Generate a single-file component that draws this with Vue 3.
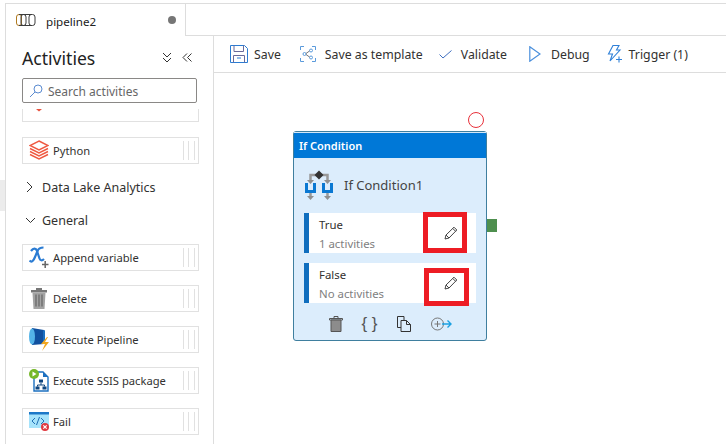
<script setup>
const items = [
  { name: 'Append variable', icon: 'append' },
  { name: 'Delete', icon: 'delete' },
  { name: 'Execute Pipeline', icon: 'pipeline' },
  { name: 'Execute SSIS package', icon: 'ssis' },
  { name: 'Fail', icon: 'fail' },
]

const branches = [
  { name: 'True', detail: '1 activities' },
  { name: 'False', detail: 'No activities' },
]
</script>

<template>
  <div class="page">
    <div class="side-strip"><div class="strip-mark"></div></div>
    <div class="work">
      <div class="tabs">
        <div class="tab">
          <svg class="tab-icon" width="20" height="12" viewBox="0 0 20 12" fill="none" stroke="#3c3c3c" stroke-width="1">
            <rect x="0.5" y="0.5" width="5" height="11" rx="2.5" stroke="#b07a20" />
            <rect x="5" y="0.5" width="5" height="11" rx="2.500" />
            <rect x="13" y="0.5" width="6" height="11" rx="2.500" />
            <path d="M3 .5h13M3 11.500h13" />
          </svg>
          <span class="tab-name">pipeline2</span>
          <span class="dot"></span>
        </div>
        <div class="tab-rest"></div>
      </div>
      <div class="main">
        <aside class="panel">
          <div class="panel-head">
            <h1>Activities</h1>
            <svg width="10" height="11" viewBox="0 0 10 11" fill="none" stroke="#333" class="collapse">
              <path d="M1 1l4 4 4-4M1 6l4 4 4-4" />
            </svg>
            <svg width="10" height="11" viewBox="0 0 10 11" fill="none" stroke="#333" class="collapse2">
              <path d="M5 1.500l-4 4 4 4M9.500 1.500l-4 4 4 4" />
            </svg>
          </div>
          <div class="search">
            <svg width="14" height="14" viewBox="0 0 14 14" fill="none" stroke="#5b8bd0">
              <circle cx="9" cy="5" r="4" />
              <path d="M6 8l-5 5" />
            </svg>
            <span>Search activities</span>
          </div>
          <div class="clip">
            <svg width="8" height="3" viewBox="0 0 8 3"><path d="M1 0h6L4 2.500z" fill="#e8533f" /></svg>
          </div>
          <div class="item first">
            <svg class="item-icon" width="20" height="21" viewBox="0 0 20 21" fill="none" stroke="#ef5a43" stroke-width="1.400">
              <path d="M10 1l9 4.500-9 4.500-9-4.500zM1 8.500l9 4.500 9-4.500M1 11.500l9 4.500 9-4.500M1 14.500l9 4.500 9-4.500" />
            </svg>
            <span>Python</span>
            <i class="grip"></i>
          </div>
          <div class="category closed">
            <svg width="8" height="12" viewBox="0 0 8 12" fill="none" stroke="#333"><path d="M1 1l5 5-5 5" /></svg>
            <span>Data Lake Analytics</span>
          </div>
          <div class="category open">
            <svg width="11" height="7" viewBox="0 0 11 7" fill="none" stroke="#333"><path d="M1 1l4.500 4.500L10 1" /></svg>
            <span>General</span>
          </div>
          <div v-for="item in items" :key="item.name" class="item">
            <svg v-if="item.icon === 'append'" class="item-icon" width="20" height="23" viewBox="0 0 20 23">
              <path d="M0.500 14.500c2 2.500 4 0.500 5.500-3.500l2.500-6c1-2.500 3-3.500 6-3.500" fill="none" stroke="#2b7cd3" stroke-width="2.200" />
              <path d="M2 5c2.500-3.500 5-3 6 0l2.500 7.500c.7 2 2.500 2.500 4.500 .5" fill="none" stroke="#2b7cd3" stroke-width="2.200" />
              <path d="M13 18.500h6.500M16.200 15v7" stroke="#666" stroke-width="1.500" />
            </svg>
            <svg v-else-if="item.icon === 'delete'" class="item-icon" width="20" height="22" viewBox="0 0 20 22">
              <path d="M7 0h6v2H7zM2 2h16v2.500H2z" fill="#777" />
              <path d="M3.500 4.500h13L15.500 21h-11z" fill="#a3a3a3" />
              <path d="M7 6.500v12M10 6.500v12M13 6.500v12" stroke="#666" stroke-width="1.200" />
            </svg>
            <svg v-else-if="item.icon === 'pipeline'" class="item-icon" width="20" height="23" viewBox="0 0 20 23">
              <path d="M3 0l12 2v14L3 17z" fill="#10509f" />
              <ellipse cx="3" cy="8.500" rx="3" ry="8" fill="#54b4e8" />
              <rect x="14" y="2" width="2" height="14" rx="1" fill="#1a6fc0" />
              <path d="M18 9l-6 7h4l-3 7 7-9h-4l3-5z" fill="#f2a71f" />
            </svg>
            <svg v-else-if="item.icon === 'ssis'" class="item-icon" width="20" height="23" viewBox="0 0 20 23">
              <path d="M5 3h9l5 5v14H5z" fill="#fff" stroke="#1c70c0" stroke-width="1.400" />
              <path d="M14 3v5h5z" fill="#1c70c0" />
              <path d="M10 10.500h4v3h-4zM6.500 17.500h4v3h-4zM13.500 17.500h4v3h-4z" fill="#10467f" />
              <path d="M12 13.500v2.500M8.500 17.500v-1.500h7v1.500" fill="none" stroke="#10467f" />
              <circle cx="5" cy="5" r="5" fill="#76b82a" />
              <path d="M3.500 2.500l4 2.500-4 2.500z" fill="#fff" />
            </svg>
            <svg v-else class="item-icon" width="20" height="19" viewBox="0 0 20 19">
              <rect x="0" y="1" width="20" height="15" fill="#a6e3fb" />
              <rect x="0" y="0" width="20" height="2.500" fill="#1c78c8" />
              <path d="M6 6l-3 3 3 3M12 6l3 3-3 3M10.500 5l-3 8" fill="none" stroke="#1f6fb5" />
              <circle cx="16" cy="15" r="4" fill="#e0383f" />
              <path d="M14.300 13.300l3.400 3.400M17.700 13.300l-3.400 3.400" stroke="#fff" stroke-width="1.200" />
            </svg>
            <span>{{ item.name }}</span>
            <i class="grip"></i>
          </div>
        </aside>
        <div class="content">
          <div class="toolbar">
            <div class="tool save">
              <svg width="18" height="18" viewBox="0 0 18 18" fill="none" stroke="#2b7cd3">
                <path d="M.5 .5h14l3 3v14H.5z" />
                <path d="M4 .5v6h9.500v-6M3.500 17.500v-7h11v7" stroke="#6a6a9a" />
                <path d="M7 13h4" stroke="#2b7cd3" />
              </svg>
              <span>Save</span>
            </div>
            <div class="tool template">
              <svg width="16" height="16" viewBox="0 0 16 16" fill="none" stroke="#5b9bdc">
                <path d="M4 .5H.5V4M.5 12v3.500H4M12 15.500h3.500V12M15.500 4V.5H12" />
                <circle cx="4.500" cy="8" r="1.500" />
                <circle cx="11" cy="4.500" r="1.500" />
                <circle cx="11" cy="11.500" r="1.500" />
                <path d="M6 7.500l3.500-2.500M6 8.500l3.500 2.500" stroke="#777" />
              </svg>
              <span>Save as template</span>
            </div>
            <div class="tool validate">
              <svg width="13" height="9" viewBox="0 0 13 9" fill="none" stroke="#3f6fc0">
                <path d="M.5 4.500l3.500 3.500 8.500-7.500" />
              </svg>
              <span>Validate</span>
            </div>
            <div class="tool debug">
              <svg width="12" height="16" viewBox="0 0 12 16" fill="none" stroke="#4a8fdc" stroke-width="1.200">
                <path d="M.8 .8l10.200 7.200L.8 15.200z" />
              </svg>
              <span>Debug</span>
            </div>
            <div class="tool trigger">
              <svg width="15" height="18" viewBox="0 0 15 18" fill="none" stroke="#2f80d8" stroke-width="1.100">
                <path d="M6 .5h6L9.500 5H13L3 16 5.500 9H1.500z" />
                <path d="M9 14.500h6M12 11.500v6" />
              </svg>
              <span>Trigger (1)</span>
            </div>
          </div>
          <div class="canvas">
            <div class="node">
              <div class="node-title">If Condition</div>
              <div class="node-name">
                <svg width="30" height="32" viewBox="0 0 30 32">
                  <path d="M6.500 13V6h17v7" fill="none" stroke="#999" stroke-width="2.500" />
                  <path d="M3 11h7l-3.500 4zM20 11h7l-3.500 4z" fill="#8f8f8f" />
                  <path d="M15 1.500l4.500 4.500-4.500 4.500-4.500-4.500z" fill="#333" />
                  <path d="M1 14h3v7h5v-7h3v10H1zM18 14h3v7h5v-7h3v10H18z" fill="#0a78d2" />
                  <path d="M6.500 24v4M23.500 24v4" stroke="#999" stroke-width="2.500" fill="none" />
                  <path d="M3 27h7l-3.500 4zM20 27h7l-3.500 4z" fill="#8f8f8f" />
                </svg>
                <span>If Condition1</span>
              </div>
              <div v-for="(branch, i) in branches" :key="branch.name" class="branch">
                <div class="branch-text">
                  <div class="branch-name">{{ branch.name }}</div>
                  <div class="branch-detail">{{ branch.detail }}</div>
                </div>
                <div class="mark" :class="i === 0 ? 'mark-a' : 'mark-b'">
                  <svg width="14" height="14" viewBox="0 0 14 14" fill="none" stroke="#444">
                    <path d="M1 13l1-4L10 1.200 12.800 4 5 12zM2 9l3 3M8.800 2.500l2.800 2.800" />
                  </svg>
                </div>
              </div>
              <div class="node-actions">
                <svg width="14" height="16" viewBox="0 0 14 16">
                  <path d="M5 .5h4v2H5zM.500 2.500h13v1.500H.500z" fill="none" stroke="#555" />
                  <path d="M2 4h10v11.500H2z" fill="#8c8c8c" stroke="#555" />
                </svg>
                <span class="braces">{ }</span>
                <svg width="14" height="16" viewBox="0 0 14 16" fill="none" stroke="#333">
                  <path d="M.5 .5H7v11H.5z" />
                  <path d="M4 4.500h5.500l4 4v7H4zM9.500 4.500v4h4" fill="#dcedfc" />
                </svg>
                <svg width="21" height="14" viewBox="0 0 21 14" fill="none">
                  <circle cx="6.500" cy="7" r="6" stroke="#777" />
                  <path d="M3.500 7h6M6.500 4v6" stroke="#777" />
                  <path d="M11 7h9M16.500 3.500L20 7l-3.500 3.500" stroke="#1ba1e2" stroke-width="1.400" />
                </svg>
              </div>
            </div>
            <div class="error-ring"></div>
            <div class="out-port"></div>
          </div>
        </div>
      </div>
    </div>
  </div>
</template>

<style scoped>
.page {
  width: 726px;
  height: 444px;
  overflow: hidden;
  display: flex;
  background: #fff;
  font-family: "Noto Sans", "Open Sans", sans-serif;
  color: #323130;
}

.side-strip {
  width: 5px;
  padding-top: 180px;
  box-sizing: border-box;
}

.strip-mark {
  height: 31px;
  background: #ececec;
}

.work {
  flex: 1;
  min-width: 0;
  display: flex;
  flex-direction: column;
  margin-top: 3px;
  border-top: 1px solid #ddd;
  border-left: 1px solid #ddd;
}

.tabs {
  display: flex;
  height: 32px;
  flex-shrink: 0;
}

.tab {
  width: 180px;
  display: flex;
  align-items: center;
  padding-left: 10px;
  box-sizing: border-box;
  border-right: 1px solid #ddd;
}

.tab-icon {
  margin-right: 10px;
}

.tab-name {
  font-size: 11.6px;
  flex: 1;
  color: #222;
  padding-top: 2px;
}

.dot {
  width: 8px;
  height: 8px;
  border-radius: 50%;
  background: #767676;
  margin-right: 9px;
}

.tab-rest {
  flex: 1;
  border-bottom: 1px solid #ddd;
}

.main {
  flex: 1;
  display: flex;
  min-height: 0;
}

.panel {
  width: 208px;
  flex-shrink: 0;
  box-sizing: border-box;
  padding: 0 14px 0 16px;
  border-right: 1px solid #ddd;
}

.panel-head {
  display: flex;
  align-items: center;
  height: 42px;
}

.panel-head h1 {
  margin: 2px 0 0;
  flex: 1;
  font-size: 17.6px;
  font-weight: 400;
  color: #222;
}

.collapse {
  margin-right: 10px;
}

.collapse2 {
  margin-right: 7px;
}

.search {
  height: 25px;
  margin-right: 2px;
  border: 1px solid #8a8886;
  border-radius: 2px;
  display: flex;
  align-items: center;
  gap: 5px;
  padding: 1px 0 0 6px;
  box-sizing: border-box;
  font-size: 12px;
  color: #666;
}

.clip {
  height: 13px;
  margin-top: 6px;
  border: 1px solid #e1e1e1;
  border-top: 0;
  box-sizing: border-box;
  display: flex;
  padding-left: 12px;
}

.clip svg {
  display: block;
}

.item {
  height: 27px;
  margin-top: 14px;
  border: 1px solid #e1e1e1;
  display: flex;
  align-items: center;
  box-sizing: border-box;
  font-size: 11.2px;
  color: #323130;
  padding-left: 6px;
}

.item.first {
  margin-top: 15px;
}

.item-icon {
  margin-right: 4px;
  flex-shrink: 0;
}

.item span {
  flex: 1;
}

.grip {
  width: 12px;
  height: 19px;
  margin-right: 3px;
  background: repeating-linear-gradient(90deg, #e1e1e1 0 1px, transparent 1px 5.5px);
}

.category {
  display: flex;
  align-items: center;
  font-size: 12.5px;
  color: #323130;
  height: 18px;
}

.closed {
  margin-top: 14px;
  gap: 8px;
  padding-left: 4px;
}

.open {
  margin-top: 15px;
  gap: 6px;
  padding-left: 3px;
  margin-bottom: 15px;
}

.content {
  flex: 1;
  min-width: 0;
  display: flex;
  flex-direction: column;
}

.toolbar {
  height: 37px;
  flex-shrink: 0;
  display: flex;
  align-items: center;
  border-bottom: 1px solid #ddd;
  box-sizing: border-box;
  font-size: 12.3px;
  color: #323130;
  padding-left: 16px;
}

.tool {
  display: flex;
  align-items: center;
}

.save { gap: 6px; margin-right: 19px; }
.template { gap: 9px; margin-right: 16px; }
.validate { gap: 9px; margin-right: 22px; }
.debug { gap: 10px; margin-right: 17px; }
.trigger { gap: 7px; }

.canvas {
  flex: 1;
  position: relative;
}

.node {
  position: absolute;
  left: 79px;
  top: 58px;
  width: 194px;
  height: 210px;
  box-sizing: border-box;
  border: 1px solid #3f7f9f;
  border-radius: 3px;
  background: #dcedfc;
}

.node-title {
  height: 26px;
  line-height: 26px;
  background: #0078d7;
  border-top: 1px solid #d5e8f8;
  box-sizing: border-box;
  color: #fff;
  font-size: 11px;
  font-weight: 600;
  padding-left: 5px;
}

.node-name {
  height: 55px;
  display: flex;
  align-items: center;
  gap: 10px;
  padding: 0 0 1px 10px;
  box-sizing: border-box;
  font-size: 13px;
  color: #444;
}

.branch {
  margin: 0 10px 10px;
  height: 40px;
  background: #fff;
  border-left: 5px solid #106ebe;
  display: flex;
  position: relative;
}

.branch-text {
  padding-left: 10px;
  font-size: 11.4px;
  line-height: 19px;
  padding-top: 2px;
}

.branch-detail {
  color: #808080;
}

.mark {
  position: absolute;
  border: 5px solid #ed1c24;
  box-sizing: border-box;
  display: flex;
  align-items: center;
  justify-content: center;
}

.mark-a {
  left: 114px;
  top: -1px;
  width: 44px;
  height: 41px;
  padding-left: 11px;
}

.mark-b {
  left: 115px;
  top: 5px;
  width: 45px;
  height: 38px;
  padding-left: 8px;
  padding-bottom: 9px;
}

.node-actions {
  display: flex;
  align-items: center;
  justify-content: center;
  gap: 20px;
  padding-top: 3px;
}

.braces {
  width: 14px;
  display: flex;
  justify-content: center;
  white-space: pre;
  font-family: "Liberation Sans", sans-serif;
  font-size: 17px;
  line-height: 16px;
  color: #555;
}

.error-ring {
  position: absolute;
  left: 254px;
  top: 39px;
  width: 16px;
  height: 16px;
  box-sizing: border-box;
  border: 1px solid #e8303a;
  border-radius: 50%;
}

.out-port {
  position: absolute;
  left: 273px;
  top: 146px;
  width: 10px;
  height: 13px;
  background: #4e8f4e;
}
</style>

<style>
body {
  background: #fff;
}
</style>
